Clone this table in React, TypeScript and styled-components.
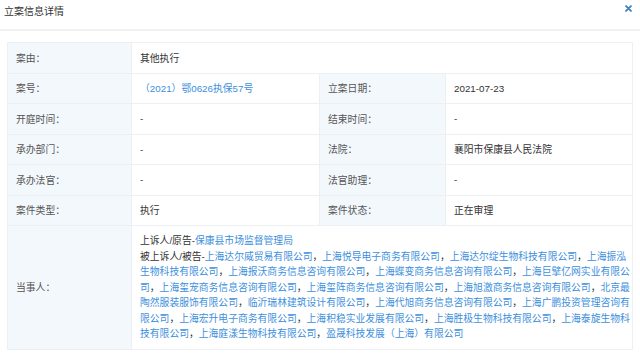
import React from 'react';
import styled, { createGlobalStyle } from 'styled-components';

const GlobalStyle = createGlobalStyle`
  body {
    margin: 0;
    background: #fff;
    font-family: "Liberation Sans", "Noto Sans CJK SC", sans-serif;
    color: #333;
  }
`;

const Page = styled.div`
  width: 640px;
  height: 360px;
  overflow: hidden;
`;

const Header = styled.div`
  display: flex;
  align-items: center;
  justify-content: space-between;
  height: 21px;
  padding: 0 8px 8px 4px;
  border-bottom: 2px solid #f1f1f1;
`;

const Title = styled.div`
  font-size: 10px;
  color: #333;
`;

const Close = styled.svg`
  width: 7px;
  height: 7px;
  margin-top: -4px;
`;

const Table = styled.div`
  display: grid;
  grid-template-columns: 124px 188px 126px 1fr;
  grid-template-rows: repeat(6, 30.5px) auto;
  width: 625px;
  margin: 11px 0 0 7px;
  border-top: 1px solid #edf0f3;
  border-left: 1px solid #edf0f3;
  font-size: 9.8px;
`;

const Cell = styled.div<{ $label?: boolean; $span?: number }>`
  display: flex;
  align-items: center;
  padding: 0 8px;
  border-right: 1px solid #edf0f3;
  border-bottom: 1px solid #edf0f3;
  background: ${p => (p.$label ? '#f3f8fd' : '#fff')};
  color: ${p => (p.$label ? '#555' : '#333')};
  grid-column: span ${p => p.$span || 1};
  white-space: nowrap;
`;

const Parties = styled.div`
  grid-column: span 3;
  padding: 7px 1px 7px 8px;
  line-height: 15.5px;
  border-right: 1px solid #edf0f3;
  border-bottom: 1px solid #edf0f3;
  color: #333;
  word-break: break-all;
`;

const Link = styled.span`
  color: #3d8fdc;
`;

const defendants = [
  '上海达尔威贸易有限公司',
  '上海悦导电子商务有限公司',
  '上海达尔绽生物科技有限公司',
  '上海振泓生物科技有限公司',
  '上海报沃商务信息咨询有限公司',
  '上海蝶变商务信息咨询有限公司',
  '上海巨擘亿网实业有限公司',
  '上海玺宠商务信息咨询有限公司',
  '上海玺阵商务信息咨询有限公司',
  '上海旭激商务信息咨询有限公司',
  '北京最陶然服装服饰有限公司',
  '临沂瑞林建筑设计有限公司',
  '上海代旭商务信息咨询有限公司',
  '上海广鹏投资管理咨询有限公司',
  '上海宏升电子商务有限公司',
  '上海积稳实业发展有限公司',
  '上海胜极生物科技有限公司',
  '上海泰旋生物科技有限公司',
  '上海庭漾生物科技有限公司',
  '盈晟科技发展（上海）有限公司',
];

export default function App() {
  return (
    <Page>
      <GlobalStyle />
      <Header>
        <Title>立案信息详情</Title>
        <Close viewBox="0 0 10 10">
          <path d="M1.5 1.5 L8.5 8.5 M8.5 1.5 L1.5 8.5" stroke="#3f7fc2" strokeWidth="2.6" strokeLinecap="round" />
        </Close>
      </Header>
      <Table>
        <Cell $label>案由：</Cell>
        <Cell $span={3}>其他执行</Cell>

        <Cell $label>案号：</Cell>
        <Cell><Link>（2021）鄂0626执保57号</Link></Cell>
        <Cell $label>立案日期：</Cell>
        <Cell>2021-07-23</Cell>

        <Cell $label>开庭时间：</Cell>
        <Cell>-</Cell>
        <Cell $label>结束时间：</Cell>
        <Cell>-</Cell>

        <Cell $label>承办部门：</Cell>
        <Cell>-</Cell>
        <Cell $label>法院：</Cell>
        <Cell>襄阳市保康县人民法院</Cell>

        <Cell $label>承办法官：</Cell>
        <Cell>-</Cell>
        <Cell $label>法官助理：</Cell>
        <Cell>-</Cell>

        <Cell $label>案件类型：</Cell>
        <Cell>执行</Cell>
        <Cell $label>案件状态：</Cell>
        <Cell>正在审理</Cell>

        <Cell $label>当事人：</Cell>
        <Parties>
          上诉人/原告-<Link>保康县市场监督管理局</Link>
          <br />
          被上诉人/被告-
          {defendants.map((d, i) => (
            <React.Fragment key={d}>
              {i > 0 && '，'}
              <Link>{d}</Link>
            </React.Fragment>
          ))}
        </Parties>
      </Table>
    </Page>
  );
}
